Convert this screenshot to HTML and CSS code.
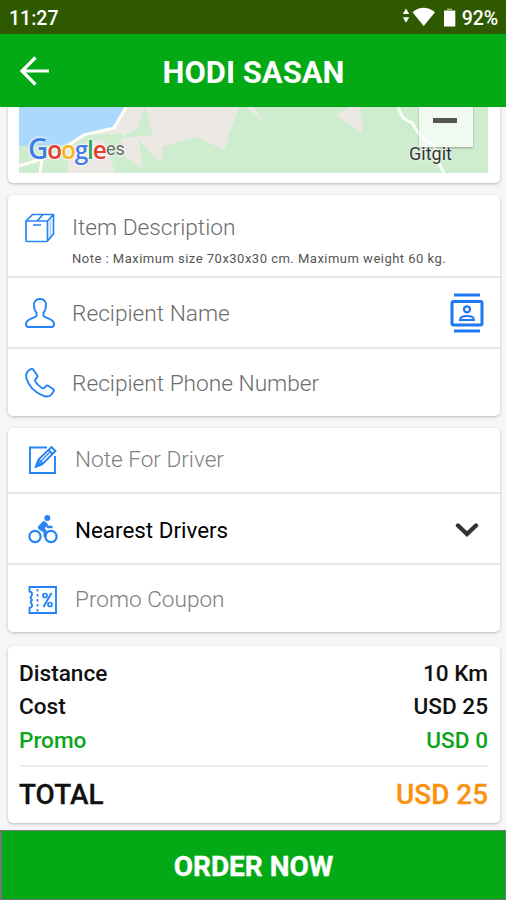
FILE: index.html
```html
<!DOCTYPE html>
<html lang="en">
<head>
<meta charset="utf-8">
<title>Hodi Sasan</title>
<link rel="stylesheet" href="styles.css">
</head>
<body>
<div class="screen">
  <div class="status">
    <span class="clock">11:27</span>
    <svg class="status-icons" width="56" height="22" viewBox="400 6 56 22" fill="#fff">
      <path d="M406 8.500l3.200 5.500h-6.400zM406 22.800l3.200-5.500h-6.400z"/>
      <path d="M412.500 12.200Q423.500 3.500 435 12.200L423.700 26z"/>
      <path d="M444 10.500h11.300v16H444z"/><path d="M447 8.500h5v2h-5z" fill="#9aae5c"/>
    </svg>
    <span class="battery">92%</span>
  </div>
  <header class="bar">
    <svg class="back" width="30" height="30" viewBox="0 0 30 30" fill="none" stroke="#fff" stroke-width="3.200"><path d="M30 15H3M16.500 1.500L3 15l13.500 13.500"/></svg>
    <h1 class="title">HODI SASAN</h1>
  </header>
  <main class="content">
    <section class="card map-card">
      <div class="map">
        <svg class="map-art" width="469" height="66" viewBox="19 107 469 66">
          <rect x="19" y="107" width="469" height="66" fill="#cdedce"/>
          <path d="M127 107h112l-15 43-27-13-34 10-2 17-22-24 4 29-18-12-5-8 2-16-30 2z" fill="#ece8e4"/>
          <path d="M145 107l-7 21-19 10 34-3-6-22zM66 147l44-8 4 19 6 15H70z" fill="#cdedce"/>
          <path d="M68 148l35-9 8 20 4 14H68zM246 107h8l10 15zM336 115l14-8h10l3 28z" fill="#ece8e4"/>
          <path d="M19 107h106l-11 21-30 7-17 10-48 1z" fill="#abd8fe"/>
          <path d="M126 107l-12 21-30 7-17 11M19 166l23-7 24-8M42 159l-2 14" fill="none" stroke="#fffdf6" stroke-width="3"/>
          <path d="M398 107l5 11 9 5 7 11 15 12 5 18 5 9" fill="none" stroke="#f8fff4" stroke-width="3"/>
        </svg>
        <span class="google"><i class="b cap">G</i><i class="r">o</i><i class="y">o</i><i class="b">g</i><i class="g">l</i><i class="r">e</i></span>
        <span class="place-left">es</span>
        <span class="zoom-out"></span>
        <span class="place-right">Gitgit</span>
      </div>
    </section>

    <section class="card recipient">
      <div class="row item">
        <svg class="icon" width="30" height="30" viewBox="0 0 30 30" fill="none" stroke="#2583f5" stroke-width="1.700" stroke-linejoin="round">
          <path d="M1 8h21.500v19.500q0 1-1 1H2q-1 0-1-1zM1 8l6.500-6.500h21L22.500 8M28.500 1.500V21l-6 7M18 1.500L12 8M8 12h8"/>
          <path d="M25.500 6v19" opacity=".4"/>
        </svg>
        <div class="field"><span class="hint">Item Description</span><span class="note">Note : Maximum size 70x30x30 cm. Maximum weight 60 kg.</span></div>
      </div>
      <div class="row name">
        <svg class="icon" width="30" height="30" viewBox="0 0 30 30" fill="none" stroke="#2583f5" stroke-width="1.900" stroke-linejoin="round">
          <path d="M15 1C10.500 1 8.500 4 9 8c.2 3 .8 5 2.500 6.500v3.300C9 20.500 1 20.500 1 26q0 3 2.500 3h23q2.500 0 2.500-3c0-5.500-8-5.500-10.500-8.200v-3.300C20.200 13 20.800 11 21 8c.5-4-1.500-7-6-7z"/>
        </svg>
        <span class="hint">Recipient Name</span>
        <svg class="contact" width="34" height="40" viewBox="0 0 34 40" fill="none" stroke="#2079f3" stroke-width="3">
          <path d="M4 2h26M4 38h26"/><rect x="2" y="8.500" width="30" height="23.500" rx="1.500"/>
          <circle cx="17" cy="16.300" r="3" stroke-width="2.300"/><path d="M10 27q0-4 7-4t7 4z" stroke-width="2"/>
        </svg>
      </div>
      <div class="row phone">
        <svg class="icon" width="30" height="30" viewBox="0 0 30 30" fill="none" stroke="#2583f5" stroke-width="1.900" stroke-linejoin="round">
          <path d="M3 3l3-2q1.500-.5 2.500 1L12 7q1 2-.5 3.200C9.500 12 9.500 12.500 11 14.500q2.500 3.500 6 5.500c1.500 1 2.500 0 3.500-1.500q1.200-1.500 3-.5l4.500 3q1.500 1.200.5 2.500l-2 3c-2 2.500-5 2.500-9 .8C9.500 24 3.500 17.500 1.500 10.500Q.5 5.500 3 3z"/>
        </svg>
        <span class="hint">Recipient Phone Number</span>
      </div>
    </section>

    <section class="card options">
      <div class="row driver-note">
        <svg class="icon" width="30" height="30" viewBox="0 0 30 30" fill="none" stroke="#2583f5" stroke-width="1.900">
          <path d="M19 2.500H2v25.500h25V11M8 21.500l2.500-7L23.500 2l4 4-13 13zM10.500 14.500l4 4M20.500 5l4 4"/><path d="M8 21.500l1.700-4.500 2.800 2.800z" fill="#2583f5"/><path d="M12.500 16.500l9-9" stroke-width="1.200"/>
        </svg>
        <span class="hint">Note For Driver</span>
      </div>
      <div class="row drivers">
        <svg class="icon" width="30" height="30" viewBox="0 0 30 30" fill="none" stroke="#2583f5" stroke-width="2.200">
          <circle cx="7" cy="22.500" r="5.600"/><circle cx="23" cy="22.500" r="5.600"/><circle cx="19.300" cy="4" r="3" fill="#2583f5" stroke="none"/>
          <path d="M16 9l-3 4.500 4 3.500v6" stroke-width="3.200"/><path d="M16 6.500L10.500 12q-1.500 1.500 0 3l4 3 5-8z" fill="#2583f5" stroke="none"/><path d="M17 9l3 4h4.500" stroke-width="2.300"/>
        </svg>
        <span class="value">Nearest Drivers</span>
        <svg class="chevron" width="24" height="16" viewBox="0 0 24 16" fill="none" stroke="#333" stroke-width="4.400" stroke-linecap="round"><path d="M3 3.500l9 8.500 9-8.500"/></svg>
      </div>
      <div class="row coupon">
        <svg class="icon" width="30" height="30" viewBox="0 0 30 30" fill="none" stroke="#2583f5" stroke-width="1.900">
          <path d="M1.500 2H28v26H1.500v-5q4-1 2-4.500Q1.500 17 4 15q-2.500-2-.5-4 2-3.500-2-4.500z"/>
          <path d="M9.500 4v23" stroke-width="1.700" stroke-dasharray="2.500 2.500"/>
          <path d="M23.500 8L15.500 22"/><circle cx="17" cy="10.500" r="2" stroke-width="1.700"/><circle cx="22" cy="19.500" r="2" stroke-width="1.700"/>
        </svg>
        <span class="hint">Promo Coupon</span>
      </div>
    </section>

    <section class="card summary">
      <div class="line"><span>Distance</span><span>10 Km</span></div>
      <div class="line"><span>Cost</span><span>USD 25</span></div>
      <div class="line green"><span>Promo</span><span>USD 0</span></div>
      <div class="total"><span>TOTAL</span><span class="amount">USD 25</span></div>
    </section>
  </main>
  <button class="order">ORDER NOW</button>
</div>
</body>
</html>
```

FILE: styles.css
```css
* { box-sizing: border-box; }
body { margin: 0; font-family: Roboto, "Liberation Sans", sans-serif; background: #f6f6f6; }
.screen { width: 506px; height: 900px; display: flex; flex-direction: column; overflow: hidden; }
.status { height: 34px; flex: none; background: #2e5900; color: #fff; display: flex; align-items: center; padding: 2px 8px 0 9px; font-size: 19.500px; font-weight: 500; }
.status-icons { margin-left: auto; margin-top: -2px; margin-right: 6px; }
.battery { font-size: 19.500px; letter-spacing: -.1px; }
.bar { height: 73px; flex: none; background: #03aa16; display: grid; grid-template-columns: 30px 1fr 30px; align-items: center; padding: 0 19px; }
.title { margin: 3px 0 0 1px; color: #fff; font-size: 31px; font-weight: 700; text-align: center; }
.content { flex: 1; padding: 0 6px 0 8px; display: flex; flex-direction: column; }
.card { background: #fff; border-radius: 5px; box-shadow: 0 1px 3px rgba(0,0,0,.25); }
.map-card { height: 76px; padding: 0 11px; border-radius: 0 0 5px 5px; margin-bottom: 12px; }
.map { position: relative; height: 66px; }
.map-art { display: block; }
.place-left, .google, .zoom-out, .place-right { position: absolute; white-space: nowrap; }
.place-left { left: 87px; top: 31px; font-size: 18px; color: #666; text-shadow: 0 0 2px #fff, 0 0 2px #fff; }
.google { left: 9px; top: 25px; font: 600 24.500px/32px "Open Sans", Roboto, sans-serif; letter-spacing: -1.200px; text-shadow: 0 0 2px #fff, 0 0 2px #fff, 0 0 3px #fff; }
.google i { font-style: normal; }
.google .cap { font-size: 28px; }
.b { color: #3f7ee8; } .r { color: #e33b2e; } .y { color: #f6b51d; } .g { color: #31a350; }
.zoom-out { right: 16px; top: 0; width: 54px; height: 40px; background: rgba(255,255,255,.7); box-shadow: 0 1px 2px rgba(0,0,0,.3); }
.zoom-out::after { content: ""; position: absolute; left: 14px; top: 11px; width: 24px; height: 5px; background: #555; }
.place-right { left: 390px; top: 36px; font-size: 18px; color: #333; text-shadow: 0 0 2px #fff, 0 0 2px #fff; }
.row { display: flex; align-items: center; padding: 0 16px 0 17px; border-bottom: 2px solid #e6e6e6; }
.row:last-child { border-bottom: 0; }
.icon { flex: none; margin-right: 17px; }
.hint, .value { font-size: 22.700px; line-height: 28px; font-weight: 300; color: #6c6c6c; white-space: nowrap; position: relative; top: 1.400px; }
.options .hint { color: #808080; font-size: 22.600px; top: 0; }
.options .value { color: #000; font-weight: 400; font-size: 22.400px; }
.recipient { height: 221px; margin-bottom: 12px; }
.item { height: 83px; align-items: flex-start; padding-top: 18px; }
.field { display: flex; flex-direction: column; }
.note { font-size: 13px; line-height: 16px; margin-top: 10px; color: #555; white-space: nowrap; letter-spacing: .490px; }
.name { height: 71px; }
.phone { height: 67px; }
.contact { margin-left: auto; }
.options { height: 204px; margin-bottom: 14px; }
.options .row { padding-left: 20px; }
.driver-note { height: 66px; }
.drivers { height: 71px; }
.coupon { height: 67px; padding-top: 3px; }
.options .drivers { padding-right: 21px; }
.chevron { margin-left: auto; position: relative; top: 1px; }
.summary { height: 177px; padding: 11px 12px 0 11px; }
.line { display: flex; justify-content: space-between; font-size: 22.600px; line-height: 33.300px; font-weight: 500; color: #111; }
.line.green { color: #0ba51c; }
.total { display: flex; justify-content: space-between; align-items: center; margin-top: 8px; height: 57px; border-top: 2px solid #eee; font-size: 27.900px; font-weight: 500; color: #111; -webkit-text-stroke: .3px currentColor; }
.amount { color: #fb920f; }
.order { height: 70px; flex: none; margin: 0; border: 1px solid #777; border-left-width: 2px; background: #03aa16; color: #fff; font: 700 28px Roboto, sans-serif; padding: 2px 0 0; -webkit-text-stroke: .4px #fff; }
```
